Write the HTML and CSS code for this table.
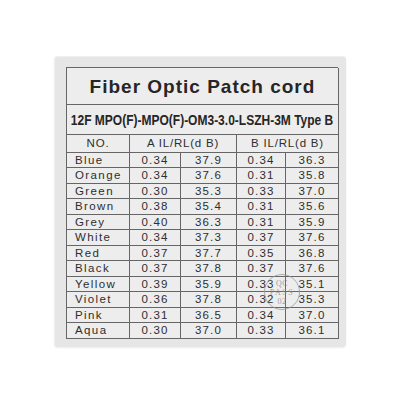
FILE: index.html
```html
<!DOCTYPE html>
<html>
<head>
<meta charset="utf-8">
<link rel="stylesheet" href="styles.css">
</head>
<body>
<div class="label">
  <div class="sheet">
    <div class="cell title">Fiber Optic Patch cord</div>
    <div class="cell subtitle"><span class="narrow">12F MPO(F)-MPO(F)-OM3-3.0-LSZH-3M Type B</span></div>
    <div class="cell head">NO.</div>
    <div class="cell head span2">A IL/RL(d B)</div>
    <div class="cell head span2">B IL/RL(d B)</div>

    <div class="cell name">Blue</div><div class="cell num">0.34</div><div class="cell num">37.9</div><div class="cell num">0.34</div><div class="cell num">36.3</div>
    <div class="cell name">Orange</div><div class="cell num">0.34</div><div class="cell num">37.6</div><div class="cell num">0.31</div><div class="cell num">35.8</div>
    <div class="cell name">Green</div><div class="cell num">0.30</div><div class="cell num">35.3</div><div class="cell num">0.33</div><div class="cell num">37.0</div>
    <div class="cell name">Brown</div><div class="cell num">0.38</div><div class="cell num">35.4</div><div class="cell num">0.31</div><div class="cell num">35.6</div>
    <div class="cell name">Grey</div><div class="cell num">0.40</div><div class="cell num">36.3</div><div class="cell num">0.31</div><div class="cell num">35.9</div>
    <div class="cell name">White</div><div class="cell num">0.34</div><div class="cell num">37.3</div><div class="cell num">0.37</div><div class="cell num">37.6</div>
    <div class="cell name">Red</div><div class="cell num">0.37</div><div class="cell num">37.7</div><div class="cell num">0.35</div><div class="cell num">36.8</div>
    <div class="cell name">Black</div><div class="cell num">0.37</div><div class="cell num">37.8</div><div class="cell num">0.37</div><div class="cell num">37.6</div>
    <div class="cell name">Yellow</div><div class="cell num">0.39</div><div class="cell num">35.9</div><div class="cell num">0.33</div><div class="cell num">35.1</div>
    <div class="cell name">Violet</div><div class="cell num">0.36</div><div class="cell num">37.8</div><div class="cell num">0.32</div><div class="cell num">35.3</div>
    <div class="cell name">Pink</div><div class="cell num">0.31</div><div class="cell num">36.5</div><div class="cell num">0.34</div><div class="cell num">37.0</div>
    <div class="cell name">Aqua</div><div class="cell num">0.30</div><div class="cell num">37.0</div><div class="cell num">0.33</div><div class="cell num">36.1</div>

    <div class="stamp"><span>QC</span><span class="pass">PASS</span><span>02</span></div>
  </div>
</div>
</body>
</html>
```

FILE: styles.css
```css
html, body {
  margin: 0;
  padding: 0;
  background: #ffffff;
}
body {
  width: 400px;
  height: 400px;
  font-family: "Liberation Sans", Arial, sans-serif;
  color: #2b2b2b;
}
.label {
  margin: 56px 0 0 54px;
  width: 292px;
  height: 291px;
  box-sizing: border-box;
  padding: 11px 8px 8px 12px;
  background: #e6e6e6;
  border-radius: 4px;
  box-shadow: inset 1px 1px 0 #f0f0f0, 0 1px 2px rgba(0,0,0,0.08);
}
.sheet {
  position: relative;
  display: grid;
  grid-template-columns: 63px 51px 56px 49px 53px;
  grid-template-rows: 37px 30px 17.5px repeat(12, 15.5px);
  border-top: 1px solid #666;
  border-left: 1px solid #666;
  width: 272px;
  box-sizing: border-box;
}
.cell {
  background: #ededed;
  border-right: 1px solid #666;
  border-bottom: 1px solid #666;
  display: flex;
  align-items: center;
  justify-content: center;
  font-size: 11.5px;
  letter-spacing: 1.1px;
  color: #2e2e2e;
  white-space: nowrap;
  overflow: hidden;
}
.title {
  grid-column: 1 / 6;
  font-size: 19px;
  font-weight: bold;
  letter-spacing: 1px;
  color: #262626;
  padding-top: 1px;
}
.subtitle {
  grid-column: 1 / 6;
  font-size: 15px;
  font-weight: bold;
  letter-spacing: 0;
  color: #262626;
}
.narrow {
  display: inline-block;
  transform: scaleX(0.8);
}
.head {
  font-size: 11.5px;
  letter-spacing: 0.8px;
}
.span2 {
  grid-column: span 2;
}
.name {
  justify-content: flex-start;
  padding-left: 8px;
  letter-spacing: 1.4px;
}
.stamp {
  position: absolute;
  left: 197px;
  top: 206px;
  width: 36px;
  height: 36px;
  box-sizing: border-box;
  border: 1px solid rgba(150,150,150,0.75);
  border-radius: 50%;
  display: flex;
  flex-direction: column;
  align-items: center;
  justify-content: center;
  font-family: "Liberation Serif", serif;
  font-size: 8px;
  line-height: 9px;
  color: rgba(135,135,135,0.8);
  letter-spacing: 0.5px;
}
.stamp .pass {
  letter-spacing: 1.5px;
}
```
